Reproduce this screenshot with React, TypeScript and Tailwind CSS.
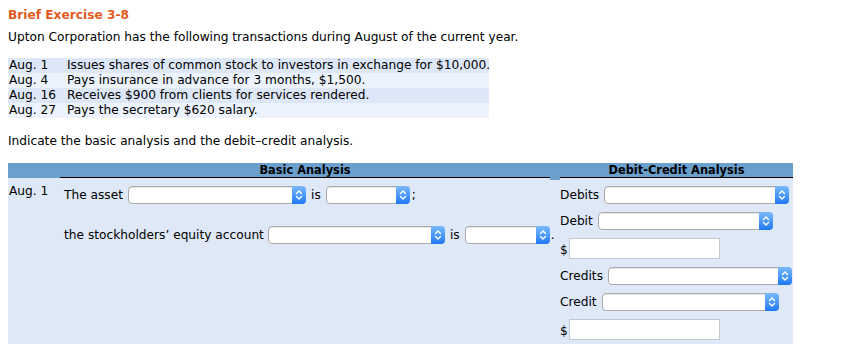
// Brief Exercise 3-8 — basic analysis / debit-credit analysis worksheet

import React from 'react';

const transactions = [
  { date: 'Aug. 1', text: 'Issues shares of common stock to investors in exchange for $10,000.' },
  { date: 'Aug. 4', text: 'Pays insurance in advance for 3 months, $1,500.' },
  { date: 'Aug. 16', text: 'Receives $900 from clients for services rendered.' },
  { date: 'Aug. 27', text: 'Pays the secretary $620 salary.' },
];

function Select({ className = '' }: { className?: string }) {
  return (
    <div
      className={[
        'relative h-[18px] shrink-0 rounded-[4px] border border-[#ababab] bg-white shadow-[inset_0_1px_0_#e6e6e6]',
        className,
      ].join(' ')}
    >
      <div className="absolute -top-px -right-px -bottom-px w-[14px] rounded-r-[4px] bg-gradient-to-b from-[#7ab9fb] to-[#1c78f4] flex items-center justify-center">
        <svg width="8" height="12" viewBox="0 0 8 12" fill="none" stroke="white" strokeWidth="1.4" strokeLinecap="round" strokeLinejoin="round">
          <path d="M1.5 4.5 L4 2 L6.5 4.5" />
          <path d="M1.5 7.5 L4 10 L6.5 7.5" />
        </svg>
      </div>
    </div>
  );
}

function Amount() {
  return (
    <div className="flex items-end gap-px mt-2">
      <span className="mb-px">$</span>
      <div className="w-[151px] h-[21px] bg-white border border-[#c4c9d1]" />
    </div>
  );
}

export default function App() {
  return (
    <div className="w-[855px] h-[344px] overflow-hidden bg-white text-black text-[12.2px] leading-[16px] whitespace-nowrap font-['Verdana','DejaVu_Sans',sans-serif] pl-2 pt-[7px]">
      <div className="text-[#e4591c] font-bold">Brief Exercise 3-8</div>
      <p className="mt-[6px]">Upton Corporation has the following transactions during August of the current year.</p>

      {/* Transactions */}
      <div className="mt-[13px] w-[481px]">
        {transactions.map((t, i) => (
          <div
            key={t.date}
            className={[
              'flex h-[15px] leading-[15px] pl-px',
              i % 2 === 0 ? 'bg-[#dde7f7]' : 'bg-[#ecf3fd]',
            ].join(' ')}
          >
            <span className="w-[58px] shrink-0">{t.date}</span>
            <span>{t.text}</span>
          </div>
        ))}
      </div>

      <p className="mt-[15px]">Indicate the basic analysis and the debit–credit analysis.</p>

      {/* Analysis table */}
      <div className="mt-[14px] w-[785px]">
        <div className="flex h-[15px] bg-[#6b9fcc] text-[11.4px] leading-[14px] font-bold">
          <div className="w-[52px]" />
          <div className="w-[490px] border-b border-black text-center">Basic Analysis</div>
          <div className="w-[10px] h-[17px] bg-[#6b9fcc]" />
          <div className="flex-1 border-b border-black text-center">Debit-Credit Analysis</div>
        </div>

        <div className="flex bg-[#dee8f7] h-[180px]">
          <div className="w-[52px] pl-px pt-[5px]">Aug. 1</div>

          <div className="w-[490px] pl-1">
            <div className="flex items-center mt-[8px]">
              <span>The asset</span>
              <Select className="ml-[5px] w-[178px]" />
              <span className="mx-[5px]">is</span>
              <Select className="w-[84px]" />
              <span className="ml-[2px]">;</span>
            </div>
            <div className="flex items-center mt-[22px]">
              <span>the stockholders’ equity account</span>
              <Select className="ml-[4px] w-[177px]" />
              <span className="mx-[5px]">is</span>
              <Select className="w-[85px]" />
              <span className="ml-[1px]">.</span>
            </div>
          </div>

          <div className="w-[10px]" />

          <div className="flex-1">
            <div className="flex items-center mt-[8px]">
              <span>Debits</span>
              <Select className="ml-[5px] w-[185px]" />
            </div>
            <div className="flex items-center mt-[8px]">
              <span>Debit</span>
              <Select className="ml-[5px] w-[175px]" />
            </div>
            <Amount />
            <div className="flex items-center mt-[8px]">
              <span>Credits</span>
              <Select className="ml-[5px] w-[184px]" />
            </div>
            <div className="flex items-center mt-[8px]">
              <span>Credit</span>
              <Select className="ml-[5px] w-[177px]" />
            </div>
            <Amount />
          </div>
        </div>
      </div>
    </div>
  );
}
